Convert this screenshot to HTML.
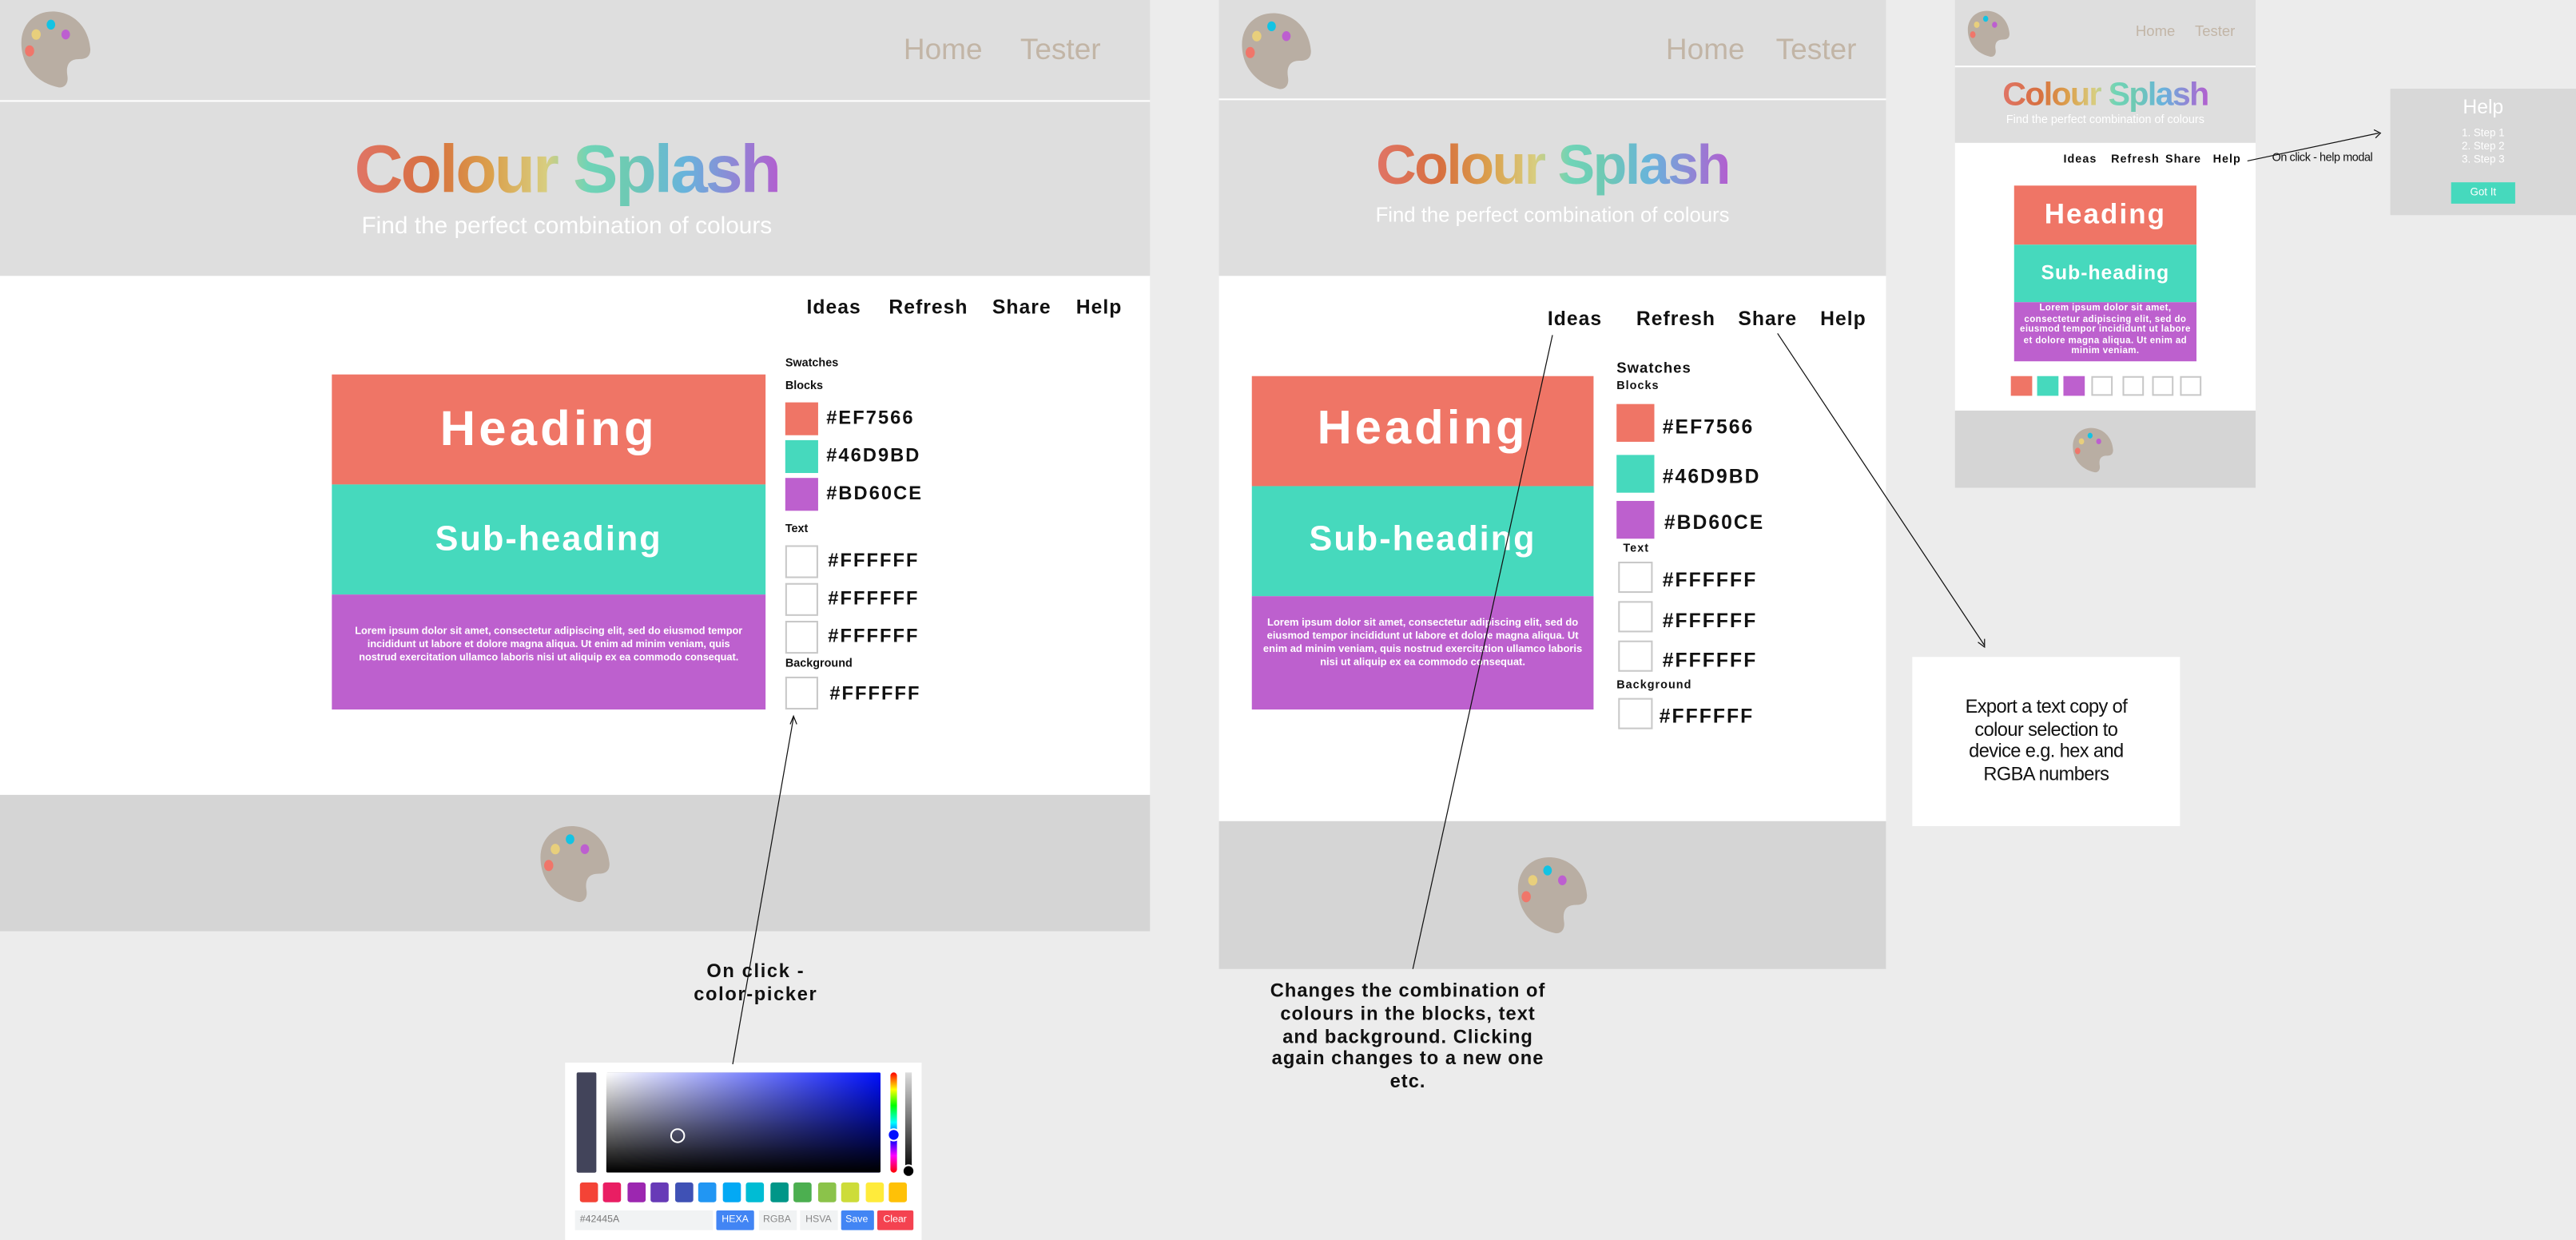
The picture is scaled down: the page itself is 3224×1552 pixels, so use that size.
<!DOCTYPE html>
<html><head><meta charset="utf-8"><style>
*{margin:0;padding:0;box-sizing:border-box}
html,body{width:3224px;height:1552px;overflow:hidden;background:#ececec;font-family:"Liberation Sans",sans-serif}
#w{position:absolute;left:0;top:0;width:1568px;height:755px;transform:scale(2.0561,2.0556);transform-origin:0 0}
.a{position:absolute}
.c{position:absolute;text-align:center;white-space:nowrap}
.grad{display:inline-block;background:linear-gradient(90deg,#e07466 0%,#d7703f 18%,#dba04c 32%,#d8cd7f 45%,#6fd4b7 55%,#6ec9b4 65%,#68b3dc 78%,#b25fcf 100%);-webkit-background-clip:text;background-clip:text;color:transparent;font-weight:bold}
.nav{position:absolute;font-weight:bold;color:#111;letter-spacing:.5px;white-space:nowrap}
.sq{position:absolute;border:1px solid #c8c8c8;background:#fff}
.hx{position:absolute;font-weight:bold;color:#111;letter-spacing:1px;white-space:nowrap}
.lb{position:absolute;font-weight:bold;color:#111;white-space:nowrap}
.tan{color:#c2b5a6;position:absolute;white-space:nowrap}
</style></head><body><div id="w">
<svg width="0" height="0" style="position:absolute"><defs>
<g id="pal"><path d="M22 1C34 1 44 10 45 24C45 29 42 30 38 30C32 30 30 34 31 40C32 46 28 48 25 47C12 44 3 34 3 20C3 9 11 1 22 1Z" fill="#b9aea3"/><ellipse cx="21" cy="9" rx="2.6" ry="3" fill="#13c3e3"/><ellipse cx="12" cy="15" rx="2.8" ry="3.2" fill="#e8cf7c"/><ellipse cx="30" cy="15" rx="2.6" ry="3" fill="#bd5fd0"/><ellipse cx="8" cy="25" rx="2.8" ry="3.4" fill="#f0766a"/></g></defs></svg>

<!-- FRAME 1 -->
<div class="a" style="left:0;top:0;width:700px;height:61px;background:#dedede"></div>
<div class="a" style="left:0;top:61px;width:700px;height:1px;background:#fff"></div>
<div class="a" style="left:0;top:62px;width:700px;height:106px;background:#dedede"></div>
<div class="a" style="left:0;top:168px;width:700px;height:316px;background:#fff"></div>
<div class="a" style="left:0;top:484px;width:700px;height:83px;background:#d5d5d5"></div>
<svg class="a" style="left:10px;top:6px" width="48" height="48" viewBox="0 0 48 48"><use href="#pal"/></svg>
<div class="tan" style="left:550px;top:20px;font-size:18px">Home</div>
<div class="tan" style="left:621px;top:20px;font-size:18px">Tester</div>
<div class="c" style="left:145px;width:400px;top:80px;font-size:41px;letter-spacing:-1.5px"><span class="grad">Colour Splash</span></div>
<div class="c" style="left:145px;width:400px;top:130px;font-size:14.5px;color:#fff">Find the perfect combination of colours</div>
<div class="nav" style="left:491px;top:180px;font-size:12px">Ideas</div>
<div class="nav" style="left:541px;top:180px;font-size:12px">Refresh</div>
<div class="nav" style="left:604px;top:180px;font-size:12px">Share</div>
<div class="nav" style="left:655px;top:180px;font-size:12px">Help</div>
<div class="a" style="left:202px;top:228px;width:264px;height:67px;background:#EF7566"></div>
<div class="c" style="left:202px;width:264px;top:245px;font-size:30px;font-weight:bold;color:#fff;letter-spacing:2px">Heading</div>
<div class="a" style="left:202px;top:295px;width:264px;height:67px;background:#46D9BD"></div>
<div class="c" style="left:202px;width:264px;top:317px;font-size:21px;font-weight:bold;color:#fff;letter-spacing:1px">Sub-heading</div>
<div class="a" style="left:202px;top:362px;width:264px;height:70px;background:#BD60CE"></div>
<div class="a" style="left:216px;width:236px;top:381px;font-size:6.2px;line-height:8px;font-weight:bold;color:#fff;text-align:center">Lorem ipsum dolor sit amet, consectetur adipiscing elit, sed do eiusmod tempor incididunt ut labore et dolore magna aliqua. Ut enim ad minim veniam, quis nostrud exercitation ullamco laboris nisi ut aliquip ex ea commodo consequat.</div>
<div class="lb" style="left:478px;top:218px;font-size:7px">Swatches</div>
<div class="lb" style="left:478px;top:232px;font-size:7px">Blocks</div>
<div class="a" style="left:478px;top:245px;width:20px;height:20px;background:#EF7566"></div>
<div class="a" style="left:478px;top:268px;width:20px;height:20px;background:#46D9BD"></div>
<div class="a" style="left:478px;top:291px;width:20px;height:20px;background:#BD60CE"></div>
<div class="hx" style="left:503px;top:249px;font-size:11.5px">#EF7566</div>
<div class="hx" style="left:503px;top:272px;font-size:11.5px">#46D9BD</div>
<div class="hx" style="left:503px;top:295px;font-size:11.5px">#BD60CE</div>
<div class="lb" style="left:478px;top:319px;font-size:7px">Text</div>
<div class="sq" style="left:478px;top:332px;width:20px;height:20px"></div>
<div class="sq" style="left:478px;top:355px;width:20px;height:20px"></div>
<div class="sq" style="left:478px;top:378px;width:20px;height:20px"></div>
<div class="hx" style="left:504px;top:336px;font-size:11.5px">#FFFFFF</div>
<div class="hx" style="left:504px;top:359px;font-size:11.5px">#FFFFFF</div>
<div class="hx" style="left:504px;top:382px;font-size:11.5px">#FFFFFF</div>
<div class="lb" style="left:478px;top:401px;font-size:7px">Background</div>
<div class="sq" style="left:478px;top:412px;width:20px;height:20px"></div>
<div class="hx" style="left:505px;top:417px;font-size:11.5px">#FFFFFF</div>
<svg class="a" style="left:326px;top:502px" width="48" height="48" viewBox="0 0 48 48"><use href="#pal"/></svg>
<div class="c" style="left:400px;width:120px;top:586px;font-size:11.5px;line-height:13.5px;font-weight:bold;color:#111;letter-spacing:.8px">On click -<br>color-picker</div>

<!-- color picker -->
<div class="a" style="left:344px;top:647px;width:217px;height:108px;background:#fff"></div>
<div class="a" style="left:350.7px;top:653px;width:12.2px;height:60.5px;background:#42445A;border-radius:1px"></div>
<div class="a" style="left:368.7px;top:653px;width:167.3px;height:60.5px;border-radius:1px;background:linear-gradient(to top,#000,rgba(0,0,0,0)),linear-gradient(to right,#fff,#0010ff)"></div>
<div class="a" style="left:408px;top:687px;width:9px;height:9px;border:1.2px solid #fff;border-radius:50%"></div>
<div class="a" style="left:541.8px;top:653px;width:4px;height:60.5px;border-radius:2px;background:linear-gradient(#f00,#ff0 17%,#0f0 33%,#0ff 50%,#00f 67%,#f0f 83%,#f00)"></div>
<div class="a" style="left:539.7px;top:687px;width:8px;height:8px;border-radius:50%;background:#0010ff;border:1px solid #fff"></div>
<div class="a" style="left:551px;top:653px;width:4px;height:60.5px;background:linear-gradient(#ddd,#000)"></div>
<div class="a" style="left:549px;top:709px;width:8px;height:8px;border-radius:50%;background:#000;border:1px solid #fff"></div>
<div class="a" style="left:352.6px;top:720px;display:flex;gap:3.5px">
<div style="width:11px;height:11.5px;border-radius:1.5px;background:#f44336"></div><div style="width:11px;height:11.5px;border-radius:1.5px;background:#e91e63"></div><div style="width:11px;height:11.5px;border-radius:1.5px;background:#9c27b0"></div><div style="width:11px;height:11.5px;border-radius:1.5px;background:#673ab7"></div><div style="width:11px;height:11.5px;border-radius:1.5px;background:#3f51b5"></div><div style="width:11px;height:11.5px;border-radius:1.5px;background:#2196f3"></div><div style="width:11px;height:11.5px;border-radius:1.5px;background:#03a9f4"></div><div style="width:11px;height:11.5px;border-radius:1.5px;background:#00bcd4"></div><div style="width:11px;height:11.5px;border-radius:1.5px;background:#009688"></div><div style="width:11px;height:11.5px;border-radius:1.5px;background:#4caf50"></div><div style="width:11px;height:11.5px;border-radius:1.5px;background:#8bc34a"></div><div style="width:11px;height:11.5px;border-radius:1.5px;background:#cddc39"></div><div style="width:11px;height:11.5px;border-radius:1.5px;background:#ffeb3b"></div><div style="width:11px;height:11.5px;border-radius:1.5px;background:#ffc107"></div></div>
<div class="a" style="left:350px;top:737px;width:84px;height:12px;background:#f1f3f4;font-size:6px;line-height:12px;padding-left:3px;color:#777">#42445A</div>
<div class="c" style="left:436px;top:737px;width:23px;height:12px;background:#4285f4;color:#fff;font-size:6px;line-height:12px;border-radius:1px">HEXA</div>
<div class="c" style="left:461.5px;top:737px;width:23px;height:12px;background:#f1f3f4;color:#888;font-size:6px;line-height:12px">RGBA</div>
<div class="c" style="left:487px;top:737px;width:22.5px;height:12px;background:#f1f3f4;color:#888;font-size:6px;line-height:12px">HSVA</div>
<div class="c" style="left:511.5px;top:737px;width:20px;height:12px;background:#4285f4;color:#fff;font-size:6px;line-height:12px;border-radius:1px">Save</div>
<div class="c" style="left:534px;top:737px;width:21.5px;height:12px;background:#f44250;color:#fff;font-size:6px;line-height:12px;border-radius:1px">Clear</div>

<!-- FRAME 2 -->
<div class="a" style="left:742px;top:0;width:406px;height:60px;background:#dedede"></div>
<div class="a" style="left:742px;top:60px;width:406px;height:1px;background:#fff"></div>
<div class="a" style="left:742px;top:61px;width:406px;height:107px;background:#dedede"></div>
<div class="a" style="left:742px;top:168px;width:406px;height:332px;background:#fff"></div>
<div class="a" style="left:742px;top:500px;width:406px;height:90px;background:#d5d5d5"></div>
<svg class="a" style="left:753px;top:7px" width="48" height="48" viewBox="0 0 48 48"><use href="#pal"/></svg>
<div class="tan" style="left:1014px;top:20px;font-size:18px">Home</div>
<div class="tan" style="left:1081px;top:20px;font-size:18px">Tester</div>
<div class="c" style="left:745px;width:400px;top:82px;font-size:34px;letter-spacing:-1.2px"><span class="grad">Colour Splash</span></div>
<div class="c" style="left:745px;width:400px;top:124px;font-size:12.5px;color:#fff">Find the perfect combination of colours</div>
<div class="nav" style="left:942px;top:187px;font-size:12px">Ideas</div>
<div class="nav" style="left:996px;top:187px;font-size:12px">Refresh</div>
<div class="nav" style="left:1058px;top:187px;font-size:12px">Share</div>
<div class="nav" style="left:1108px;top:187px;font-size:12px">Help</div>
<div class="a" style="left:762px;top:229px;width:208px;height:67px;background:#EF7566"></div>
<div class="c" style="left:762px;width:208px;top:245px;font-size:29px;font-weight:bold;color:#fff;letter-spacing:2px">Heading</div>
<div class="a" style="left:762px;top:296px;width:208px;height:67px;background:#46D9BD"></div>
<div class="c" style="left:762px;width:208px;top:317px;font-size:21px;font-weight:bold;color:#fff;letter-spacing:1px">Sub-heading</div>
<div class="a" style="left:762px;top:363px;width:208px;height:69px;background:#BD60CE"></div>
<div class="a" style="left:766px;width:200px;top:376px;font-size:6.3px;line-height:8px;font-weight:bold;color:#fff;text-align:center">Lorem ipsum dolor sit amet, consectetur adipiscing elit, sed do eiusmod tempor incididunt ut labore et dolore magna aliqua. Ut enim ad minim veniam, quis nostrud exercitation ullamco laboris nisi ut aliquip ex ea commodo consequat.</div>
<div class="lb" style="left:984px;top:219px;font-size:9px;letter-spacing:.5px">Swatches</div>
<div class="lb" style="left:984px;top:232px;font-size:7px;letter-spacing:.5px">Blocks</div>
<div class="a" style="left:984px;top:246px;width:23px;height:23px;background:#EF7566"></div>
<div class="a" style="left:984px;top:277px;width:23px;height:23px;background:#46D9BD"></div>
<div class="a" style="left:984px;top:305px;width:23px;height:23px;background:#BD60CE"></div>
<div class="hx" style="left:1012px;top:253px;font-size:12px">#EF7566</div>
<div class="hx" style="left:1012px;top:283px;font-size:12px">#46D9BD</div>
<div class="hx" style="left:1013px;top:311px;font-size:12px">#BD60CE</div>
<div class="lb" style="left:988px;top:331px;font-size:7px;letter-spacing:.5px">Text</div>
<div class="sq" style="left:985px;top:342px;width:21px;height:19px"></div>
<div class="sq" style="left:985px;top:366px;width:21px;height:19px"></div>
<div class="sq" style="left:985px;top:390px;width:21px;height:19px"></div>
<div class="hx" style="left:1012px;top:346px;font-size:12px">#FFFFFF</div>
<div class="hx" style="left:1012px;top:371px;font-size:12px">#FFFFFF</div>
<div class="hx" style="left:1012px;top:395px;font-size:12px">#FFFFFF</div>
<div class="lb" style="left:984px;top:414px;font-size:7px;letter-spacing:.5px">Background</div>
<div class="sq" style="left:985px;top:425px;width:21px;height:19px"></div>
<div class="hx" style="left:1010px;top:429px;font-size:12px">#FFFFFF</div>
<svg class="a" style="left:921px;top:521px" width="48" height="48" viewBox="0 0 48 48"><use href="#pal"/></svg>
<div class="c" style="left:767px;width:180px;top:598px;font-size:11.5px;line-height:13.8px;font-weight:bold;color:#111;letter-spacing:.5px">Changes the combination of<br>colours in the blocks, text<br>and background. Clicking<br>again changes to a new one<br>etc.</div>
<div class="a" style="left:1164px;top:400px;width:163px;height:103px;background:#fff"></div>
<div class="c" style="left:1164px;width:163px;top:425px;font-size:11.5px;line-height:13.5px;color:#111;letter-spacing:-.3px">Export a text copy of<br>colour selection to<br>device e.g. hex and<br>RGBA numbers</div>

<!-- FRAME 3 -->
<div class="a" style="left:1190px;top:0;width:183px;height:40px;background:#dedede"></div>
<div class="a" style="left:1190px;top:40px;width:183px;height:1px;background:#fff"></div>
<div class="a" style="left:1190px;top:41px;width:183px;height:46px;background:#dedede"></div>
<div class="a" style="left:1190px;top:87px;width:183px;height:163px;background:#fff"></div>
<div class="a" style="left:1190px;top:250px;width:183px;height:47px;background:#d5d5d5"></div>
<svg class="a" style="left:1196px;top:6px" width="29" height="29" viewBox="0 0 48 48"><use href="#pal"/></svg>
<div class="tan" style="left:1300px;top:14px;font-size:9px">Home</div>
<div class="tan" style="left:1336px;top:14px;font-size:9px">Tester</div>
<div class="c" style="left:1190px;width:183px;top:47px;font-size:20px;letter-spacing:-.8px"><span class="grad">Colour Splash</span></div>
<div class="c" style="left:1190px;width:183px;top:70px;font-size:7px;color:#fff">Find the perfect combination of colours</div>
<div class="nav" style="left:1256px;top:94px;font-size:7px">Ideas</div>
<div class="nav" style="left:1285px;top:94px;font-size:7px">Refresh</div>
<div class="nav" style="left:1318px;top:94px;font-size:7px">Share</div>
<div class="nav" style="left:1347px;top:94px;font-size:7px">Help</div>
<div class="a" style="left:1226px;top:113px;width:111px;height:36px;background:#EF7566"></div>
<div class="c" style="left:1226px;width:111px;top:121px;font-size:17px;font-weight:bold;color:#fff;letter-spacing:1px">Heading</div>
<div class="a" style="left:1226px;top:149px;width:111px;height:35px;background:#46D9BD"></div>
<div class="c" style="left:1226px;width:111px;top:159px;font-size:12px;font-weight:bold;color:#fff;letter-spacing:.5px">Sub-heading</div>
<div class="a" style="left:1226px;top:184px;width:111px;height:36px;background:#BD60CE"></div>
<div class="a" style="left:1229px;width:105px;top:185px;font-size:5.6px;line-height:6.6px;font-weight:bold;color:#fff;text-align:center;letter-spacing:.2px">Lorem ipsum dolor sit amet, consectetur adipiscing elit, sed do eiusmod tempor incididunt ut labore et dolore magna aliqua. Ut enim ad minim veniam.</div>
<div class="a" style="left:1224px;top:229px;width:13px;height:12px;background:#EF7566"></div>
<div class="a" style="left:1240px;top:229px;width:13px;height:12px;background:#46D9BD"></div>
<div class="a" style="left:1256px;top:229px;width:13px;height:12px;background:#BD60CE"></div>
<div class="sq" style="left:1273px;top:229px;width:13px;height:12px"></div>
<div class="sq" style="left:1292px;top:229px;width:13px;height:12px"></div>
<div class="sq" style="left:1310px;top:229px;width:13px;height:12px"></div>
<div class="sq" style="left:1327px;top:229px;width:13px;height:12px"></div>
<svg class="a" style="left:1260px;top:260px" width="28" height="28" viewBox="0 0 48 48"><use href="#pal"/></svg>
<div class="a" style="left:1383px;top:93px;font-size:7px;color:#111;white-space:nowrap;letter-spacing:-.2px">On click - help modal</div>
<div class="a" style="left:1455px;top:54px;width:113px;height:77px;background:#d8d8d8"></div>
<div class="c" style="left:1455px;width:113px;top:58px;font-size:12px;color:#fff">Help</div>
<div class="c" style="left:1455px;width:113px;top:78px;font-size:6.5px;line-height:8px;color:#fff">1. Step 1<br>2. Step 2<br>3. Step 3</div>
<div class="c" style="left:1492px;top:111px;width:39px;height:13px;background:#46D9BD;color:#fff;font-size:6.5px;line-height:13px">Got It</div>

<!-- annotation lines -->
<svg class="a" style="left:0;top:0" width="1568" height="755" viewBox="0 0 1568 755">
<g stroke="#111" stroke-width=".6" fill="none">
<line x1="483" y1="437" x2="446" y2="648"/>
<path d="M481 441L483 436L485 441"/>
<line x1="945" y1="204" x2="860" y2="590"/>
<line x1="1082" y1="203" x2="1208" y2="393"/>
<path d="M1204 391L1208 394L1208 389"/>
<line x1="1368" y1="98" x2="1448" y2="81"/>
<path d="M1445 79L1449 81L1446 84"/>
</g></svg>
</div></body></html>
